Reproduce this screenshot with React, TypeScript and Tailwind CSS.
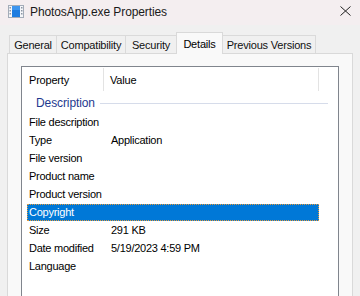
const tabs = [
  { label: 'General', w: 'w-[48px]' },
  { label: 'Compatibility', w: 'w-[70px]' },
  { label: 'Security', w: 'w-[52px]' },
  { label: 'Details', w: 'w-[47px]', active: true },
  { label: 'Previous Versions', w: 'w-[94px]' },
]

const rows: [string, string][] = [
  ['File description', ''],
  ['Type', 'Application'],
  ['File version', ''],
  ['Product name', ''],
  ['Product version', ''],
  ['Copyright', ''],
  ['Size', '291 KB'],
  ['Date modified', '5/19/2023 4:59 PM'],
  ['Language', ''],
]

function FilmIcon() {
  return (
    <svg width="16" height="13" viewBox="0 0 16 13">
      <rect x="0.5" y="0.5" width="15" height="12" fill="#f4f6f9" stroke="#a3acb8" />
      <rect x="4" y="1" width="8" height="11" fill="#1c7ce0" />
      <rect x="4" y="1" width="8" height="4" fill="#3d95ee" />
      {[2, 5, 8].map((y) => (
        <g key={y}>
          <rect x="1.5" y={y} width="1.5" height="1.5" fill="#8a94a3" />
          <rect x="13" y={y} width="1.5" height="1.5" fill="#8a94a3" />
        </g>
      ))}
    </svg>
  )
}

export default function App() {
  return (
    <div className="w-[360px] h-[296px] overflow-hidden flex flex-col bg-[#f0f0f0] text-black font-['Liberation_Sans',Arial,sans-serif]">
      {/* Title bar */}
      <div className="h-[25px] flex items-center bg-[#f4eef0] shrink-0">
        <div className="ml-[8px] mt-[-2px]">
          <FilmIcon />
        </div>
        <span className="ml-[6px] text-[12px] tracking-[-0.1px] text-[#1a1a1a] mt-[-2px]">PhotosApp.exe Properties</span>
        <svg className="ml-auto mr-[9px] mt-[-3px]" width="11" height="10" viewBox="0 0 11 10">
          <path d="M0.5 0.5 L10.5 9.5 M10.5 0.5 L0.5 9.5" stroke="#222" strokeWidth="1" />
        </svg>
      </div>

      {/* Tabs */}
      <div className="relative flex-1 pt-[7px] px-[7px]">
        <div className="flex items-end h-[21px] pl-[2px] relative z-10">
          {tabs.map((t) =>
            t.active ? (
              <div
                key={t.label}
                className={`${t.w} h-[22px] -mb-px -ml-px bg-[#f9f9f9] border border-b-0 border-[#d9d9d9] flex items-start justify-center pt-[3px] text-[11px] tracking-[-0.2px]`}
              >
                {t.label}
              </div>
            ) : (
              <div
                key={t.label}
                className={`${t.w} h-[18px] bg-[#f0f0f0] border border-b-0 border-[#dadada] -ml-px first:ml-0 flex items-center justify-center pt-px text-[11px] tracking-[-0.2px] text-[#111]`}
              >
                {t.label}
              </div>
            )
          )}
        </div>

        {/* Panel */}
        <div className="h-[260px] bg-[#f9f9f9] border border-[#d9d9d9] pt-[12px] pl-[13px] pr-[13px]">
          <div className="h-[240px] bg-white border border-[#80858d] pt-px">
            {/* Header */}
            <div className="flex h-[24px] text-[11px] tracking-[-0.2px]">
              <div className="w-[82px] pl-[7px] pt-[2px] flex items-center mb-[1px] border-r border-[#e3e3e3]">Property</div>
              <div className="w-[215px] pl-[6px] pt-[2px] flex items-center mb-[1px] border-r border-[#e3e3e3]">Value</div>
            </div>

            {/* Group */}
            <div className="flex items-center h-[22px] pl-[14px] pr-[10px]">
              <span className="text-[12px] text-[#1e3a8f] tracking-[-0.1px]">Description</span>
              <div className="flex-1 h-px bg-[#d6dcea] ml-[5px]" />
            </div>

            {/* Rows */}
            <div className="pl-[5px]">
              {rows.map(([k, v], i) => (
                <div key={k} className="h-[18px] w-[292px]">
                  <div
                    className={`flex items-center h-[17px] text-[11px] tracking-[-0.25px] ${
                      i === 5 ? 'bg-[#0078d7] text-white outline-1 outline-dotted outline-[#e59a3c] -outline-offset-1' : ''
                    }`}
                  >
                    <span className="w-[84px] pl-[2px]">{k}</span>
                    <span>{v}</span>
                  </div>
                </div>
              ))}
            </div>
          </div>
        </div>
      </div>
    </div>
  )
}
